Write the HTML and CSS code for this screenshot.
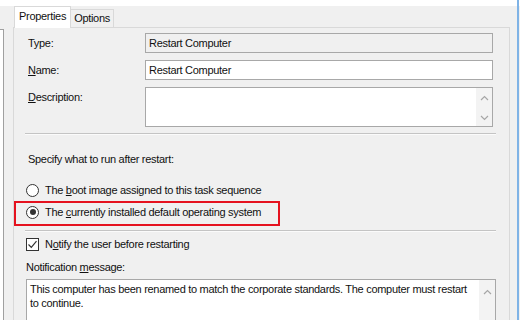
FILE: index.html
```html
<!DOCTYPE html>
<html>
<head>
	<meta charset="UTF-8">
	<title>Restart Computer</title>
	<link rel="stylesheet" href="styles.css">
</head>
<body>

<div class="window">
	<!-- strip of the task sequence tree on the left -->
	<div class="sidebar"><div class="tree"></div></div>

	<div class="tabs">
		<div class="tabstrip">
			<span class="tab active">Properties</span>
			<span class="tab">Options</span>
		</div>

		<div class="panel">
			<div class="fields">
				<label>Type:</label>
				<div class="field readonly">Restart Computer</div>
				<label><u>N</u>ame:</label>
				<div class="field">Restart Computer</div>
				<label><u>D</u>escription:</label>
				<div class="field memo">
					<span class="text"></span>
					<span class="scroll">
						<svg width="9" height="6" viewBox="0 0 9 6"><path d="M1 5 L4.5 1.5 L8 5" fill="none" stroke="#a6a6a6" stroke-width="1.2"/></svg>
						<svg width="9" height="6" viewBox="0 0 9 6"><path d="M1 1 L4.5 4.5 L8 1" fill="none" stroke="#a6a6a6" stroke-width="1.2"/></svg>
					</span>
				</div>
			</div>

			<div class="sep"></div>

			<p class="heading">Specify what to run after restart:</p>

			<div class="options">
				<div class="option">
					<span class="radio"></span>
					<span>The <u>b</u>oot image assigned to this task sequence</span>
				</div>
				<div class="option marked">
					<span class="radio checked"></span>
					<span>The <u>c</u>urrently installed default operating system</span>
					<span class="highlight"></span>
				</div>
			</div>

			<div class="sep second"></div>

			<div class="check">
				<span class="box">
					<svg width="11" height="11" viewBox="0 0 11 11"><path d="M1.5 5.5 L4.3 8.3 L9.5 2.2" fill="none" stroke="#333" stroke-width="1.2"/></svg>
				</span>
				<span>N<u>o</u>tify the user before restarting</span>
			</div>

			<p class="heading small">Notification <u>m</u>essage:</p>

			<div class="message">
				<span class="text">This computer has been renamed to match the corporate standards. The computer must restart<br>to continue.</span>
				<span class="scroll">
					<svg width="9" height="6" viewBox="0 0 9 6"><path d="M1 5 L4.5 1.5 L8 5" fill="none" stroke="#a6a6a6" stroke-width="1.2"/></svg>
				</span>
			</div>
		</div>
	</div>

	<div class="edge"></div>
</div>

</body>
</html>
```

FILE: styles.css
```css
	html, body { margin: 0; padding: 0; background-color: #ffffff; }
	body { width: 520px; height: 320px; overflow: hidden; font-family: "Liberation Sans", Arial, sans-serif; font-size: 11px; letter-spacing: -0.3px; color: #111; }
	p { margin: 0; }
	u { text-decoration: underline; text-underline-offset: 1px; }

	.window { display: flex; height: 314px; margin-top: 6px; background-color: #f0f0f0; }

	.sidebar { width: 13px; flex: none; padding-top: 23px; }
	.tree { width: 3px; height: 100%; border-top: 1px solid #a0a0a0; border-right: 1px solid #a0a0a0; background-color: #ffffff; }

	.tabs { width: 497px; flex: none; display: flex; flex-direction: column; }
	.tabstrip { display: flex; align-items: flex-end; height: 21px; padding-left: 1px; }
	.tab { border: 1px solid #d9d9d9; border-bottom: 0; padding: 0 3px; height: 17px; line-height: 17px; font-size: 11px; background-color: #f0f0f0; }
	.tab.active { height: 21px; line-height: 19px; background-color: #ffffff; margin-bottom: -1px; position: relative; z-index: 1; padding: 0 4px; }
	.tab + .tab { border-left: 0; }

	.panel { flex: 1; border: 1px solid #d9d9d9; border-bottom: 0; padding: 5px 13px 0 11px; overflow: hidden; }

	.fields { display: grid; grid-template-columns: 120px 1fr; grid-template-rows: 20px 20px 40px; row-gap: 7px; margin-right: 3px; }
	.fields label { padding-left: 3px; line-height: 20px; }
	.field { border: 1px solid #a8a8a8; background-color: #ffffff; padding-left: 3px; line-height: 18px; white-space: nowrap; }
	.field.readonly { background-color: #f0f0f0; }
	.memo { display: flex; padding-left: 0; }
	.memo .text { flex: 1; }

	.scroll { width: 16px; display: flex; flex-direction: column; align-items: center; justify-content: space-between; padding: 7px 0 5px; background-color: #f3f3f3; }

	.sep { height: 0; margin-top: 6px; border-top: 1px solid #c4c4c4; border-bottom: 1px solid #fbfbfb; }
	.sep.second { margin-top: 7px; }

	.heading { line-height: 14px; margin: 17px 0 0 3px; }
	.heading.small { margin-top: 9px; margin-left: 1px; }

	.options { margin-top: 13px; }
	.option { display: flex; align-items: center; gap: 6px; height: 22px; padding-left: 1px; }
	.option.marked { position: relative; }
	.radio { width: 11px; height: 11px; border: 1px solid #333; border-radius: 50%; background-color: #ffffff; display: flex; align-items: center; justify-content: center; }
	.radio.checked::after { content: ""; width: 6px; height: 6px; border-radius: 50%; background-color: #333; }

	/* annotation box drawn over the second option */
	.highlight { position: absolute; left: -11px; top: 0; width: 262px; height: 21px; border: 2px solid #e5121f; }

	.check { display: flex; align-items: center; gap: 6px; height: 14px; margin-top: 5px; padding-left: 1px; }
	.box { width: 11px; height: 11px; border: 1px solid #333; background-color: #ffffff; display: flex; align-items: center; justify-content: center; }

	.message { display: flex; height: 40px; margin: 5px 0 0 1px; border: 1px solid #a8a8a8; border-bottom: 0; background-color: #ffffff; }
	.message .text { flex: 1; padding: 2px 4px 0 3px; line-height: 14px; white-space: nowrap; }
	.message .scroll { justify-content: flex-start; padding-top: 9px; }

	.edge { flex: 1; position: relative; }
	.edge::after { content: ""; position: absolute; top: -6px; bottom: 0; right: 1px; width: 2px; background-color: #7fb3e6; }
```
